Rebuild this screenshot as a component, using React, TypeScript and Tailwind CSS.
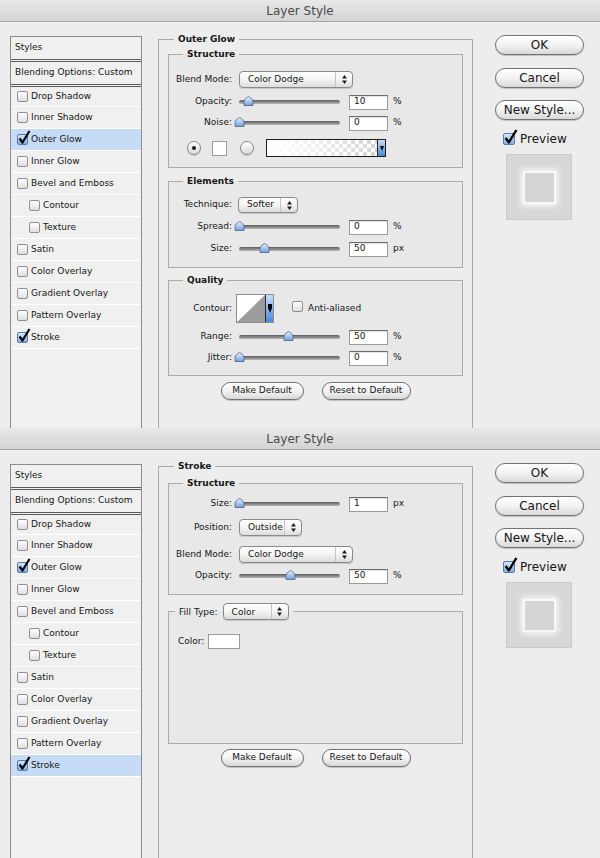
import React from "react";

type Effect = { name: string; sub?: boolean };

const effects: Effect[] = [
  { name: "Drop Shadow" },
  { name: "Inner Shadow" },
  { name: "Outer Glow" },
  { name: "Inner Glow" },
  { name: "Bevel and Emboss" },
  { name: "Contour", sub: true },
  { name: "Texture", sub: true },
  { name: "Satin" },
  { name: "Color Overlay" },
  { name: "Gradient Overlay" },
  { name: "Pattern Overlay" },
  { name: "Stroke" },
];

const enabled = ["Outer Glow", "Stroke"];

function Check({ on, big }: { on?: boolean; big?: boolean }) {
  const size = big ? "h-[12px] w-[12px]" : "h-[11px] w-[11px]";
  const fill = on
    ? "from-[#d6e6fb] to-[#7eaee8] border-[#5b7ba6]"
    : "from-white to-[#dedede] border-[#8f8f8f]";
  return (
    <span className={`relative inline-block shrink-0 rounded-[2px] border bg-gradient-to-b ${size} ${fill}`}>
      {on && (
        <svg
          className="absolute -top-[4px] left-[0px] overflow-visible"
          width={big ? 14 : 13}
          height={big ? 14 : 13}
          viewBox="0 0 13 13"
        >
          <path d="M1.5 7.5 L4.5 11.5 L11.5 0" fill="none" stroke="#000" strokeWidth="2.2" strokeLinejoin="round" />
        </svg>
      )}
    </span>
  );
}

function Radio({ on }: { on?: boolean }) {
  return (
    <span className="flex h-[14px] w-[14px] shrink-0 items-center justify-center rounded-full border border-[#8a8a8a] bg-gradient-to-b from-white to-[#d9d9d9] shadow-[0_1px_1px_rgba(0,0,0,0.15)]">
      {on && <span className="h-[4px] w-[4px] rounded-full bg-[#1c1c1c]" />}
    </span>
  );
}

function UpDown() {
  return (
    <svg width="5" height="9" viewBox="0 0 5 9">
      <path d="M2.5 0 L5 3.5 H0 Z M0 5.5 H5 L2.5 9 Z" fill="#1f1f1f" />
    </svg>
  );
}

function Popup({ value, className }: { value: string; className: string }) {
  return (
    <div
      className={`flex shrink-0 items-stretch rounded-[4px] border border-[#8a8a8a] bg-gradient-to-b from-white via-[#f4f4f4] to-[#dcdcdc] shadow-[0_1px_1px_rgba(0,0,0,0.15)] ${className}`}
    >
      <span className="flex flex-1 items-center pl-[8px]">{value}</span>
      <span className="flex w-[17px] items-center justify-center border-l border-[#c4c4c4]">
        <UpDown />
      </span>
    </div>
  );
}

function Thumb() {
  return (
    <svg width="11" height="10" viewBox="0 0 11 10">
      <defs>
        <linearGradient id="thumbFill" x1="0" y1="0" x2="0" y2="1">
          <stop offset="0" stopColor="#eaf3ff" />
          <stop offset="1" stopColor="#6d9fe2" />
        </linearGradient>
      </defs>
      <path
        d="M1 9.5 V5.5 C1 3.6 3 1.6 5.5 0.6 C8 1.6 10 3.6 10 5.5 V9.5 Z"
        fill="url(#thumbFill)"
        stroke="#4f627e"
        strokeWidth="0.8"
      />
    </svg>
  );
}

function Slider({ pos }: { pos: number }) {
  return (
    <div className="relative ml-[7px] flex h-[16px] w-[101px] shrink-0 items-center">
      <div className="h-[4px] w-full rounded-full bg-gradient-to-b from-[#5c5c5c] to-[#b8b8b8]" />
      <div className="absolute top-[2px]" style={{ left: pos - 5 }}>
        <Thumb />
      </div>
    </div>
  );
}

function NumBox({ value }: { value: string }) {
  return (
    <div className="ml-[9px] flex h-[15px] w-[39px] shrink-0 items-center border border-[#9a9a9a] border-t-[#6c6c6c] bg-white pl-[4px] shadow-[inset_0_1px_1px_rgba(0,0,0,0.12)]">
      {value}
    </div>
  );
}

function Label({ children }: { children: React.ReactNode }) {
  return <span className="w-[63px] shrink-0 text-right">{children}</span>;
}

function SliderRow({ label, pos, value, unit, className }: { label: string; pos: number; value: string; unit: string; className: string }) {
  return (
    <div className={`flex h-[16px] items-center ${className}`}>
      <Label>{label}</Label>
      <Slider pos={pos} />
      <NumBox value={value} />
      <span className="ml-[5px]">{unit}</span>
    </div>
  );
}

function DropTab({ tall }: { tall?: boolean }) {
  return (
    <div className="flex w-[8px] shrink-0 items-center justify-center border-l border-[#2a2a2a] bg-gradient-to-b from-[#c7defa] to-[#4a8ad9]">
      {tall ? (
        <svg width="4" height="9" viewBox="0 0 4 9">
          <path d="M0 0 H4 V4 L2 9 L0 4 Z" fill="#000" />
        </svg>
      ) : (
        <svg width="4" height="5" viewBox="0 0 4 5">
          <path d="M0 0 H4 L2 5 Z" fill="#000" />
        </svg>
      )}
    </div>
  );
}

function PillButton({ children, className }: { children: React.ReactNode; className: string }) {
  return (
    <div
      className={`flex shrink-0 items-center justify-center rounded-full border border-[#727272] bg-gradient-to-b from-white via-[#f3f3f3] to-[#d9d9d9] shadow-[0_1px_1px_rgba(0,0,0,0.2)] ${className}`}
    >
      {children}
    </div>
  );
}

function Group({ title, className, children }: { title: string; className: string; children: React.ReactNode }) {
  return (
    <fieldset className={`mx-[9px] border border-[#ababab] bg-black/[0.02] ${className}`}>
      <legend className="ml-[14px] px-[4px] font-bold leading-[12px]">{title}</legend>
      {children}
    </fieldset>
  );
}

function StylesPanel({ active }: { active: string }) {
  return (
    <div className="ml-[10px] mt-[14px] flex w-[132px] shrink-0 flex-col self-stretch border border-b-0 border-[#8c8c8c] bg-[#f0f0f0]">
      <div className="flex h-[22px] items-center pl-[4px]">Styles</div>
      <div className="h-[3px] border-y border-[#5c5c5c]" />
      <div className="flex h-[22px] items-center pl-[4px]">Blending Options: Custom</div>
      <div className="h-[3px] border-y border-[#5c5c5c]" />
      {effects.map((e, i) => (
        <div
          key={e.name}
          className={`flex items-center border-b border-white ${i === 0 ? "h-[20px]" : "h-[22px]"} ${e.sub ? "pl-[18px]" : "pl-[6px]"} ${active === e.name ? "bg-[#c6dcf6]" : ""}`}
        >
          <Check on={enabled.includes(e.name)} />
          <span className="ml-[3px]">{e.name}</span>
        </div>
      ))}
    </div>
  );
}

function SideColumn() {
  return (
    <div className="ml-[22px] mt-[13px] flex w-[89px] shrink-0 flex-col text-[12px]">
      <PillButton className="h-[20px] w-[89px]">OK</PillButton>
      <PillButton className="mt-[13px] h-[20px] w-[89px]">Cancel</PillButton>
      <PillButton className="mt-[12px] h-[20px] w-[89px]">New Style...</PillButton>
      <div className="mt-[12px] flex h-[14px] items-center pl-[8px]">
        <Check on big />
        <span className="ml-[5px]">Preview</span>
      </div>
      <div className="ml-[11px] mt-[8px] flex h-[66px] w-[66px] items-center justify-center border border-[#cacaca] bg-[#d7d7d7]">
        <div className="h-[33px] w-[33px] border-2 border-[#f8f8f8] bg-[#d5d5d5] shadow-[0_0_6px_2px_rgba(255,255,255,0.85)]" />
      </div>
    </div>
  );
}

function Dialog({ height, children }: { height: string; children: React.ReactNode }) {
  return (
    <div className={`flex flex-col overflow-hidden ${height}`}>
      <div className="flex h-[22px] shrink-0 items-center justify-center border-b border-[#a5a5a5] bg-gradient-to-b from-[#e9e9e9] to-[#d3d3d3] text-[12px] text-[#4a4a4a]">
        Layer Style
      </div>
      <div className="flex flex-1 items-start">{children}</div>
    </div>
  );
}

function DefaultButtons({ className }: { className: string }) {
  return (
    <div className={`flex justify-center gap-[18px] ${className}`}>
      <PillButton className="h-[18px] w-[83px]">Make Default</PillButton>
      <PillButton className="h-[18px] w-[89px]">Reset to Default</PillButton>
    </div>
  );
}

function OuterGlowDialog() {
  return (
    <Dialog height="h-[428px]">
      <StylesPanel active="Outer Glow" />
      <fieldset className="ml-[16px] mt-[11px] w-[315px] shrink-0 self-stretch border border-b-0 border-[#a9a9a9]">
        <legend className="ml-[15px] px-[4px] font-bold leading-[12px]">Outer Glow</legend>

        <Group title="Structure" className="mt-[3px] pb-[10px]">
          <div className="mt-[11px] flex h-[17px] items-center">
            <Label>Blend Mode:</Label>
            <Popup value="Color Dodge" className="ml-[7px] h-[17px] w-[114px]" />
          </div>
          <SliderRow className="mt-[6px]" label="Opacity:" pos={9} value="10" unit="%" />
          <SliderRow className="mt-[5px]" label="Noise:" pos={0} value="0" unit="%" />
          <div className="mt-[8px] flex h-[18px] items-center pl-[18px]">
            <Radio on />
            <div className="ml-[11px] h-[15px] w-[15px] shrink-0 border border-[#9a9a9a] bg-white" />
            <div className="ml-[13px]">
              <Radio />
            </div>
            <div className="ml-[12px] flex h-[18px] w-[120px] border border-[#1e1e1e]">
              <div className="flex-1 bg-[conic-gradient(#d4d4d4_25%,#ffffff_0_50%,#d4d4d4_0_75%,#ffffff_0)] bg-[length:8px_8px]">
                <div className="h-full w-full bg-gradient-to-r from-white via-white/60 to-transparent" />
              </div>
              <DropTab />
            </div>
          </div>
        </Group>

        <Group title="Elements" className="mt-[7px] pb-[10px]">
          <div className="mt-[10px] flex h-[16px] items-center">
            <Label>Technique:</Label>
            <Popup value="Softer" className="ml-[6px] h-[16px] w-[60px]" />
          </div>
          <SliderRow className="mt-[6px]" label="Spread:" pos={0} value="0" unit="%" />
          <SliderRow className="mt-[6px]" label="Size:" pos={25} value="50" unit="px" />
        </Group>

        <Group title="Quality" className="mt-[6px] pb-[9px]">
          <div className="mt-[8px] flex h-[29px] items-center">
            <Label>Contour:</Label>
            <div className="ml-[4px] flex h-[29px] w-[38px] shrink-0 border border-[#8d8d8d] bg-white">
              <svg width="28" height="27" viewBox="0 0 28 27" className="shrink-0">
                <path d="M0 27 L28 0 V27 Z" fill="#9c9c9c" />
              </svg>
              <DropTab tall />
            </div>
            <div className="ml-[18px]">
              <Check />
            </div>
            <span className="ml-[5px]">Anti-aliased</span>
          </div>
          <SliderRow className="mt-[6px]" label="Range:" pos={49} value="50" unit="%" />
          <SliderRow className="mt-[5px]" label="Jitter:" pos={0} value="0" unit="%" />
        </Group>

        <DefaultButtons className="mt-[6px]" />
      </fieldset>
      <SideColumn />
    </Dialog>
  );
}

function StrokeDialog() {
  return (
    <Dialog height="h-[430px]">
      <StylesPanel active="Stroke" />
      <fieldset className="ml-[16px] mt-[10px] w-[315px] shrink-0 self-stretch border border-b-0 border-[#a9a9a9]">
        <legend className="ml-[15px] px-[4px] font-bold leading-[12px]">Stroke</legend>

        <Group title="Structure" className="mt-[5px] pb-[10px]">
          <SliderRow className="mt-[7px]" label="Size:" pos={0} value="1" unit="px" />
          <div className="mt-[7px] flex h-[17px] items-center">
            <Label>Position:</Label>
            <Popup value="Outside" className="ml-[7px] h-[17px] w-[63px]" />
          </div>
          <div className="mt-[10px] flex h-[17px] items-center">
            <Label>Blend Mode:</Label>
            <Popup value="Color Dodge" className="ml-[7px] h-[17px] w-[114px]" />
          </div>
          <SliderRow className="mt-[5px]" label="Opacity:" pos={51} value="50" unit="%" />
        </Group>

        <fieldset className="mx-[9px] mt-[8px] h-[141px] border border-[#ababab] bg-black/[0.02]">
          <legend className="ml-[6px] flex items-center px-[4px] leading-[12px]">
            <span>Fill Type:</span>
            <Popup value="Color" className="ml-[5px] h-[17px] w-[66px]" />
          </legend>
          <div className="mt-[14px] flex h-[15px] items-center pl-[9px]">
            <span>Color:</span>
            <div className="ml-[4px] h-[15px] w-[32px] border border-[#9a9a9a] bg-white" />
          </div>
        </fieldset>

        <DefaultButtons className="mt-[5px]" />
      </fieldset>
      <SideColumn />
    </Dialog>
  );
}

export default function App() {
  return (
    <div className="w-[600px] bg-[#ededed] font-['DejaVu_Sans',sans-serif] text-[9px] text-[#161616]">
      <OuterGlowDialog />
      <StrokeDialog />
    </div>
  );
}
